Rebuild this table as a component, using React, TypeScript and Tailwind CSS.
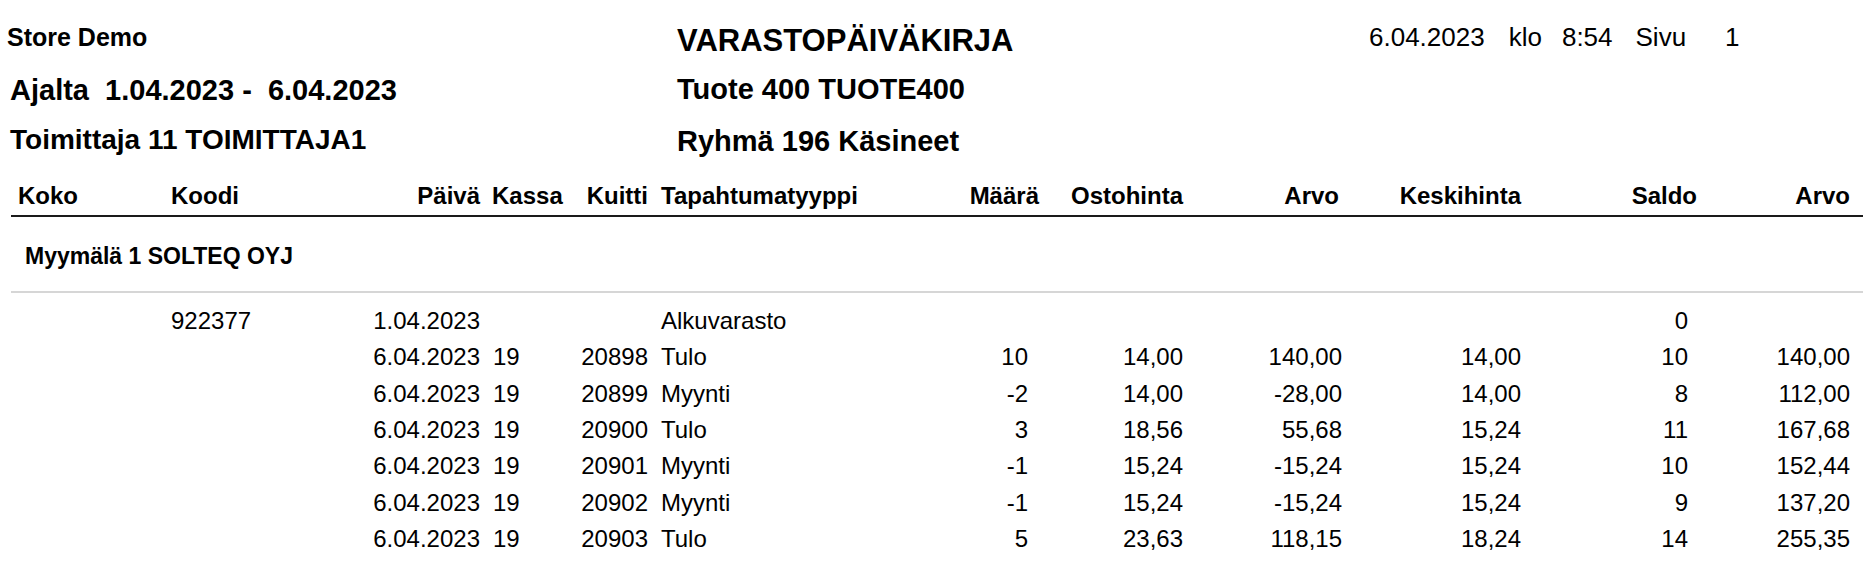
const rows = [
  { koodi: "922377", paiva: "1.04.2023", kassa: "", kuitti: "", tyyppi: "Alkuvarasto", maara: "", osto: "", arvo: "", keski: "", saldo: "0", arvo2: "" },
  { koodi: "", paiva: "6.04.2023", kassa: "19", kuitti: "20898", tyyppi: "Tulo", maara: "10", osto: "14,00", arvo: "140,00", keski: "14,00", saldo: "10", arvo2: "140,00" },
  { koodi: "", paiva: "6.04.2023", kassa: "19", kuitti: "20899", tyyppi: "Myynti", maara: "-2", osto: "14,00", arvo: "-28,00", keski: "14,00", saldo: "8", arvo2: "112,00" },
  { koodi: "", paiva: "6.04.2023", kassa: "19", kuitti: "20900", tyyppi: "Tulo", maara: "3", osto: "18,56", arvo: "55,68", keski: "15,24", saldo: "11", arvo2: "167,68" },
  { koodi: "", paiva: "6.04.2023", kassa: "19", kuitti: "20901", tyyppi: "Myynti", maara: "-1", osto: "15,24", arvo: "-15,24", keski: "15,24", saldo: "10", arvo2: "152,44" },
  { koodi: "", paiva: "6.04.2023", kassa: "19", kuitti: "20902", tyyppi: "Myynti", maara: "-1", osto: "15,24", arvo: "-15,24", keski: "15,24", saldo: "9", arvo2: "137,20" },
  { koodi: "", paiva: "6.04.2023", kassa: "19", kuitti: "20903", tyyppi: "Tulo", maara: "5", osto: "23,63", arvo: "118,15", keski: "18,24", saldo: "14", arvo2: "255,35" },
];

// column widths follow the printed report
const grid =
  "grid grid-cols-[160px_201px_108px_79px_89px_251px_140px_144px_159px_179px_176px_153px]";

export default function App() {
  return (
    <div className="w-[1876px] h-[561px] overflow-hidden bg-white text-black font-['Liberation_Sans',Arial,sans-serif]">
      {/* report header */}
      <div className="flex h-[176px]">
        <div className="w-[677px] flex flex-col font-bold">
          <div className="mt-[17px] pl-[7px] text-[25px] leading-[40px]">Store Demo</div>
          <div className="mt-[13px] pl-[10px] text-[29px] leading-[40px] whitespace-pre">Ajalta  1.04.2023 -  6.04.2023</div>
          <div className="mt-[10px] pl-[10px] text-[28px] leading-[40px]">Toimittaja 11 TOIMITTAJA1</div>
        </div>
        <div className="w-[692px] flex flex-col font-bold">
          <div className="mt-[21px] text-[31px] leading-[40px]">VARASTOPÄIVÄKIRJA</div>
          <div className="mt-[8px] text-[29px] leading-[40px]">Tuote 400 TUOTE400</div>
          <div className="mt-[12px] text-[29px] leading-[40px]">Ryhmä 196 Käsineet</div>
        </div>
        <div className="flex mt-[17px] h-[40px] text-[26px] leading-[40px]">
          <span>6.04.2023</span>
          <span className="ml-[24px]">klo</span>
          <span className="ml-[20px]">8:54</span>
          <span className="ml-[23px]">Sivu</span>
          <span className="ml-[39px]">1</span>
        </div>
      </div>

      <div className="ml-[11px] w-[1852px]">
        {/* column titles */}
        <div className={`${grid} h-[41px] items-center text-[24px] font-bold border-b-2 border-[#1a1a1a]`}>
          <div className="pl-[7px]">Koko</div>
          <div>Koodi</div>
          <div className="text-right">Päivä</div>
          <div className="pl-[12px]">Kassa</div>
          <div className="text-right">Kuitti</div>
          <div className="pl-[13px]">Tapahtumatyyppi</div>
          <div className="text-right">Määrä</div>
          <div className="text-right">Ostohinta</div>
          <div className="text-right pr-[3px]">Arvo</div>
          <div className="text-right">Keskihinta</div>
          <div className="text-right">Saldo</div>
          <div className="text-right">Arvo</div>
        </div>

        <div className="h-[76px] flex items-center pt-[4px] pl-[14px] text-[23px] font-bold border-b-2 border-[#d6d6d6]">
          Myymälä 1 SOLTEQ OYJ
        </div>

        <div className="pt-[10px] text-[24px]">
          {rows.map((r, i) => (
            <div key={i} className={`${grid} h-[36.3px] items-center`}>
              <div />
              <div>{r.koodi}</div>
              <div className="text-right">{r.paiva}</div>
              <div className="pl-[13px]">{r.kassa}</div>
              <div className="text-right">{r.kuitti}</div>
              <div className="pl-[13px]">{r.tyyppi}</div>
              <div className="text-right pr-[11px]">{r.maara}</div>
              <div className="text-right">{r.osto}</div>
              <div className="text-right">{r.arvo}</div>
              <div className="text-right">{r.keski}</div>
              <div className="text-right pr-[9px]">{r.saldo}</div>
              <div className="text-right">{r.arvo2}</div>
            </div>
          ))}
        </div>
      </div>
    </div>
  );
}
